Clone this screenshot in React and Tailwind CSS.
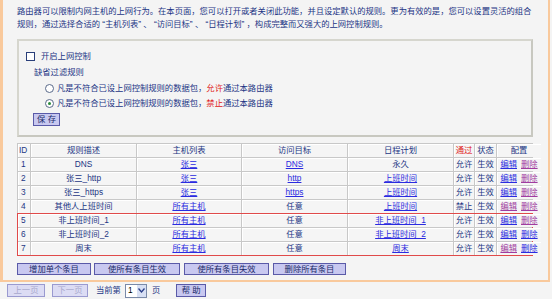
import React from "react";

const cols = "grid-cols-[12px_105px_104px_105px_105px_20px_21px_44px]";

const rows = [
  { id: 1, desc: "DNS", host: "张三", target: "DNS", targetLink: true, sched: "永久", schedLink: false, pass: "允许", edit: "b", del: "p" },
  { id: 2, desc: "张三_http", host: "张三", target: "http", targetLink: true, sched: "上班时间", schedLink: true, pass: "允许", edit: "b", del: "p" },
  { id: 3, desc: "张三_https", host: "张三", target: "https", targetLink: true, sched: "上班时间", schedLink: true, pass: "允许", edit: "b", del: "p" },
  { id: 4, desc: "其他人上班时间", host: "所有主机", target: "任意", targetLink: false, sched: "上班时间", schedLink: true, pass: "禁止", edit: "p", del: "p" },
  { id: 5, desc: "非上班时间_1", host: "所有主机", target: "任意", targetLink: false, sched: "非上班时间_1", schedLink: true, pass: "允许", edit: "b", del: "p" },
  { id: 6, desc: "非上班时间_2", host: "所有主机", target: "任意", targetLink: false, sched: "非上班时间_2", schedLink: true, pass: "允许", edit: "b", del: "b" },
  { id: 7, desc: "周末", host: "所有主机", target: "任意", targetLink: false, sched: "周末", schedLink: true, pass: "允许", edit: "p", del: "b" },
];

function Cell({ children, className = "" }) {
  return (
    <div className={`h-[13px] bg-[#f5f5f5] shadow-[inset_1px_1px_0_#ffffff] flex items-center justify-center leading-none whitespace-nowrap overflow-hidden ${className}`}>
      {children}
    </div>
  );
}

function A({ children, c = "b" }) {
  return (
    <span className={`underline ${c === "p" ? "text-[#a03ca0]" : "text-[#2b2be0]"}`}>{children}</span>
  );
}

function Row({ r }) {
  return (
    <>
      <Cell className="justify-start pl-[3px]">{r.id}</Cell>
      <Cell>{r.desc}</Cell>
      <Cell><A>{r.host}</A></Cell>
      <Cell>{r.targetLink ? <A>{r.target}</A> : r.target}</Cell>
      <Cell>{r.schedLink ? <A>{r.sched}</A> : r.sched}</Cell>
      <Cell>{r.pass}</Cell>
      <Cell>生效</Cell>
      <Cell className="gap-[4px]">
        <A c={r.edit}>编辑</A>
        <A c={r.del}>删除</A>
      </Cell>
    </>
  );
}

function Btn({ children, className = "", disabled }) {
  return (
    <button
      className={`h-[12px] border leading-none text-[8.3px] whitespace-nowrap flex items-center justify-center ${
        disabled
          ? "border-[#9a9ad0] bg-[#dcdcf4] text-[#a8a8cc]"
          : "border-[#5a5aa8] bg-[#c8c8f0] text-[#1a2a6a]"
      } ${className}`}
    >
      {children}
    </button>
  );
}

export default function App() {
  return (
    <div
      className="w-[552px] h-[299px] bg-[#f4f4f4] text-[#1c3584] text-[8.3px] overflow-hidden"
      style={{ fontFamily: '"Liberation Sans", "Noto Sans CJK SC", sans-serif' }}
    >
      <div className="w-[550px] h-[282px] border-l-[3px] border-r-2 border-b-2 border-[#f9c99c] pl-[14px] pt-[5px]">
        <p className="leading-[13px] w-[516px]">
          路由器可以限制内网主机的上网行为。在本页面，您可以打开或者关闭此功能，并且设定默认的规则。更为有效的是，您可以设置灵活的组合规则，通过选择合适的 “主机列表” 、 “访问目标” 、 “日程计划” ，构成完整而又强大的上网控制规则。
        </p>

        <div className="mt-[8px] w-[516px] h-[98px] border-2 border-t-[#d6d6ce] border-l-[#d6d6ce] border-r-[#c8c8c0] border-b-[#c8c8c0] pl-[7px] pt-[9px]">
          <div className="flex items-center gap-[6px] h-[12px] whitespace-nowrap">
            <span className="w-[9px] h-[9px] border border-[#2a3f7a] bg-white" />
            <span>开启上网控制</span>
          </div>
          <div className="mt-[4px] pl-[8px] h-[13px] leading-[13px]">缺省过滤规则</div>
          <div className="mt-[3px] pl-[19px] flex flex-col gap-[2px] whitespace-nowrap">
            <div className="flex items-center gap-[3px] h-[13px]">
              <span className="w-[9px] h-[9px] rounded-full border border-[#5a6a8a] bg-white" />
              <span>
                凡是不符合已设上网控制规则的数据包，<span className="text-[#e02020]">允许</span>通过本路由器
              </span>
            </div>
            <div className="flex items-center gap-[3px] h-[13px]">
              <span className="w-[9px] h-[9px] rounded-full border border-[#5a6a8a] bg-white flex items-center justify-center">
                <span className="w-[3px] h-[3px] rounded-full bg-[#2a8a3a]" />
              </span>
              <span>
                凡是不符合已设上网控制规则的数据包，<span className="text-[#e02020]">禁止</span>通过本路由器
              </span>
            </div>
          </div>
          <Btn className="mt-[3px] ml-[7px] w-[27px] h-[13px]">保 存</Btn>
        </div>

        <div className="mt-[6px] w-[516px]">
          <div className={`grid ${cols} gap-px bg-[#c8c8c8] p-px`}>
            <Cell className="justify-start pl-[1px]">ID</Cell>
            <Cell>规则描述</Cell>
            <Cell>主机列表</Cell>
            <Cell>访问目标</Cell>
            <Cell>日程计划</Cell>
            <Cell className="text-[#e02020]">通过</Cell>
            <Cell>状态</Cell>
            <Cell>配置</Cell>
            {rows.slice(0, 4).map((r) => (
              <Row key={r.id} r={r} />
            ))}
          </div>
          <div className={`grid ${cols} gap-px bg-[#c8c8c8] border border-[#e04a4a] -mt-px`}>
            {rows.slice(4).map((r) => (
              <Row key={r.id} r={r} />
            ))}
          </div>
        </div>

        <div className="mt-[7px] flex">
          <Btn className="w-[74px]">增加单个条目</Btn>
          <Btn className="ml-[3px] w-[86px]">使所有条目生效</Btn>
          <Btn className="ml-[4px] w-[85px]">使所有条目失效</Btn>
          <Btn className="ml-[4px] w-[73px]">删除所有条目</Btn>
        </div>
      </div>

      <div className="flex items-center h-[17px] pl-[7px] whitespace-nowrap">
        <Btn disabled className="w-[38px] h-[13px]">上一页</Btn>
        <Btn disabled className="ml-[7px] w-[36px] h-[13px]">下一页</Btn>
        <span className="ml-[8px]">当前第</span>
        <span className="ml-[4px] w-[22px] h-[14px] border border-[#7a8aa8] bg-white flex items-center justify-between pl-[2px] text-black">
          1
          <span className="w-[9px] h-full bg-[#d8e0f4] flex items-center justify-center">
            <svg width="7" height="5" viewBox="0 0 7 5">
              <path d="M0.5 0.5 L3.5 4 L6.5 0.5" fill="none" stroke="#2a3f8a" strokeWidth="1.3" />
            </svg>
          </span>
        </span>
        <span className="ml-[5px]">页</span>
        <Btn className="ml-[16px] w-[30px] h-[13px]">帮 助</Btn>
      </div>
    </div>
  );
}
